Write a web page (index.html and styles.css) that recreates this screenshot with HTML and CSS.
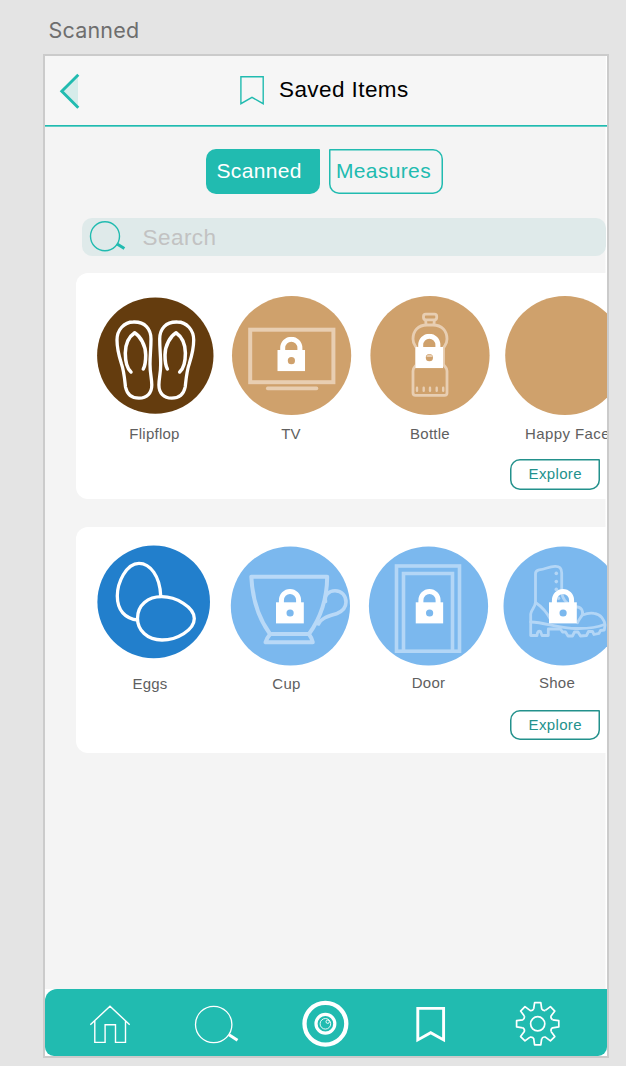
FILE: index.html
```html
<!DOCTYPE html>
<html lang="en">
<head>
<meta charset="utf-8">
<title>Saved Items</title>
<link rel="stylesheet" href="styles.css">
</head>
<body>
<svg class="defs" width="0" height="0" aria-hidden="true">
  <symbol id="lock" viewBox="0 0 28 35">
    <path d="M5.4 14V11.4A8.6 8.9 0 0 1 22.6 11.4V14" fill="none" stroke="#fff" stroke-width="5"/>
    <rect y="13.3" width="27.8" height="21.1" fill="#fff"/>
    <circle cx="14.1" cy="24" r="3.6" fill="currentColor"/>
  </symbol>
</svg>
<p class="artboard-name">Scanned</p>
<main class="artboard">
  <div class="screen">
  <header class="header">
    <svg class="back" width="24" height="40" viewBox="58 71 24 40">
      <path d="M78 75V107.500L61.500 91.300Z" fill="#d6ecea"/>
      <path d="M78.300 74.800L61.800 91.300L78.300 107.700" fill="none" stroke="#21bbb0" stroke-width="2.900"/>
    </svg>
    <svg class="mark" width="26" height="32" viewBox="239 75 26 32">
      <path d="M240.900 76.800H263.200V103.700L252 97.400L240.900 103.700Z" fill="none" stroke="#21bbb0" stroke-width="1.400"/>
    </svg>
    <h1 class="title">Saved Items</h1>
  </header>
  <div class="tabs">
    <span class="tab tab-active">Scanned</span>
    <span class="tab tab-outline">Measures</span>
  </div>
  <div class="search">
    <svg width="40" height="34" viewBox="88 220 40 34" fill="none" stroke="#21bbb0">
      <circle cx="105" cy="236.200" r="14.500" stroke-width="1.400"/>
      <path d="M116.700 243.800L124.400 248.600" stroke-width="3"/>
    </svg>
    <span class="placeholder">Search</span>
  </div>

  <section class="card">
    <div class="items">
      <div class="item brown">
        <svg width="120" height="120" viewBox="95 296 120 120">
          <circle cx="155.300" cy="355.600" r="58.200" fill="#643c0e"/>
          <g fill="none" stroke="#fff" stroke-width="3.300" stroke-linecap="round" stroke-linejoin="round">
            <g id="sandal">
              <path d="M133.300 322C145 321.500 151 329 151 339C151 350 150 355 150 364C150 374 151.800 378 151.800 385C151.800 393 147 398.200 139 398.200C131 398.200 127 394 125.500 387C124.500 378 124 371 121.500 364C119 356 117 350 117 340C117 330 124 322 133.300 322Z"/>
              <path d="M131 372C126.500 368 125.300 359 125.300 353C125.500 343 130 336 134.700 332.800C140 336 145.700 345 145.700 355C145.700 361 145 366 143.300 369" stroke-width="3.500"/>
            </g>
            <use href="#sandal" transform="matrix(-1 0 0 1 310.700 0)"/>
          </g>
        </svg>
        <span class="label label-flipflop">Flipflop</span>
      </div>
      <div class="item tan">
        <svg width="120" height="120" viewBox="232 296 120 120">
          <circle cx="291.600" cy="355.500" r="59.600" fill="currentColor"/>
          <g fill="none" stroke="#e8ceb2">
            <rect x="250.200" y="329.700" width="83.200" height="52.500" stroke-width="4"/>
            <path d="M267.700 388.400H316.500" stroke-width="3.600" stroke-linecap="round"/>
          </g>
          <use href="#lock" x="277.300" y="336.700" width="28" height="35"/>
        </svg>
        <span class="label label-tv">TV</span>
      </div>
      <div class="item tan">
        <svg width="120" height="120" viewBox="370 296 120 120">
          <circle cx="430" cy="355.500" r="59.600" fill="currentColor"/>
          <g fill="none" stroke="#e8ceb2" stroke-width="2.800">
            <rect x="423.500" y="314.200" width="13.200" height="5.600" rx="2.200"/>
            <path d="M425.700 320.500L426 324.500M434.300 320.500L434 324.500"/>
            <path d="M416.500 348C415 345 413 344 413 339C413 331 418 325 427 325H433C442 325 447 331 447 339C447 344 445 345 443.500 348V364C444 367 447 367 447 371V393Q447 395.300 444.500 395.300H415.500Q413 395.300 413 393V371C413 367 416 367 416.500 364Z"/>
            <path d="M417 387.700V390.800M423.700 387.700V390.800M430 387.700V390.800M436.700 387.700V390.800M443.200 387.700V390.800" stroke-width="2.400" stroke-linecap="round"/>
          </g>
          <use href="#lock" x="415.300" y="333.700" width="28" height="35"/>
          <path d="M426.300 357A3.300 3.300 0 0 1 432.700 357Z" fill="#e8ceb2"/>
        </svg>
        <span class="label label-bottle">Bottle</span>
      </div>
      <div class="item tan">
        <svg width="120" height="120" viewBox="505 296 120 120">
          <circle cx="564.800" cy="355.500" r="59.600" fill="currentColor"/>
        </svg>
        <span class="label label-happy">Happy Face</span>
      </div>
    </div>
    <span class="explore">Explore</span>
  </section>

  <section class="card card-blue">
    <div class="items">
      <div class="item">
        <svg width="120" height="120" viewBox="94 546 120 120">
          <circle cx="153.700" cy="601.900" r="56.300" fill="#227fcc"/>
          <g fill="none" stroke="#fff" stroke-width="3.300">
            <path d="M160.700 596C160 576 150 563.300 139 563.300C126 563.300 117.300 583 117.300 596C117.300 610 125 619 138 620"/>
            <path d="M161.700 596.700C176 596.700 194.300 607 194.300 618.500C194.300 630 177 640 162 640C147 640 137.500 630 137.500 618.500C137.500 605 148 596.700 161.700 596.700Z"/>
          </g>
        </svg>
        <span class="label label-eggs">Eggs</span>
      </div>
      <div class="item sky">
        <svg width="120" height="120" viewBox="231 546 120 120">
          <circle cx="290.400" cy="606" r="59.600" fill="currentColor"/>
          <g fill="none" stroke="#b9d9f7" stroke-width="4" stroke-linejoin="round" stroke-linecap="round">
            <path d="M251.300 576.700H327.200C327 600 320.500 618 309 634H270C259 619 252.500 601 251.300 576.700Z"/>
            <path d="M270 634.300Q267 637.500 265.500 642.300H312.800Q311.500 637.500 309 634.300"/>
            <path d="M325.500 601.500C324 595 329 590.700 335 590.700C342 590.700 346 596 346 602C346 608 343 611 337 613.500C328 616.500 321 618 318.500 624" stroke-width="3.600"/>
          </g>
          <use href="#lock" x="276" y="589" width="28" height="35"/>
        </svg>
        <span class="label label-cup">Cup</span>
      </div>
      <div class="item sky">
        <svg width="120" height="120" viewBox="369 546 120 120">
          <circle cx="428.500" cy="606" r="59.600" fill="currentColor"/>
          <g fill="none" stroke="#b3d6f6" stroke-width="3.600">
            <rect x="396.500" y="566" width="63" height="85.200"/>
            <path d="M403.500 650V573.500H452.500V650"/>
          </g>
          <use href="#lock" x="415.500" y="589" width="28" height="35"/>
        </svg>
        <span class="label label-door">Door</span>
      </div>
      <div class="item sky">
        <svg width="120" height="120" viewBox="504 546 120 120">
          <circle cx="563.100" cy="606" r="59.600" fill="currentColor"/>
          <g fill="none" stroke="#b3d6f6" stroke-width="2.800" stroke-linejoin="round" stroke-linecap="round">
            <path d="M535.500 602V574Q535.300 570.500 539 569.800C546 569.500 548 566.500 555 566.300Q561.700 566 561.700 573V591C562 599 566 603 573 607Q579 606 581.700 609.500Q583 612 582.500 615Q589 612.300 594 613.300C601 614 604.500 620 605 625L604.300 630L600.500 630.500L599 633.300L594 634.500L592.500 631.500H588.500L586.500 635.500L580.500 636L578 632H574.500L572.500 636H568L565.500 632H562.500L560.500 629H548.300V635.500H542L540.500 631.500Q537.500 630 537 635.500H530.700V614C531.500 609 535 608 535.500 602Z"/>
            <path d="M530.700 622C545 622.500 555 627.500 571.700 628.300C585 629 596 628 604.500 624.500M535.500 602.500C544 608 548 614 551.700 621.500M582.500 614.500C580.500 618 578.500 620 577.500 622.700"/>
          </g>
          <g fill="#b3d6f6"><circle cx="556.300" cy="573.400" r="1.800"/><circle cx="556.300" cy="581.600" r="1.800"/><circle cx="556.300" cy="589.400" r="1.800"/><circle cx="558.500" cy="598.300" r="1.800"/></g>
          <use href="#lock" x="549" y="589" width="28" height="35"/>
        </svg>
        <span class="label label-shoe">Shoe</span>
      </div>
    </div>
    <span class="explore">Explore</span>
  </section>
  </div>

  <nav class="nav">
    <svg width="44" height="50" viewBox="88 999 44 50" fill="none" stroke="#fff" stroke-width="1.400">
      <path d="M90.300 1024.700L110 1006.300L129.700 1024.700M94.800 1021V1042.400H105.100V1024.700H115.500V1042.400H125.500V1021"/>
    </svg>
    <svg width="46" height="50" viewBox="193 999 46 50" fill="none" stroke="#fff">
      <circle cx="213.700" cy="1024.500" r="18.200" stroke-width="1.300"/>
      <path d="M229 1034.800L237.500 1040.200" stroke-width="3"/>
    </svg>
    <svg width="50" height="50" viewBox="300 999 50 50" fill="none" stroke="#fff">
      <circle cx="325.400" cy="1023.800" r="20.900" stroke-width="4.300"/>
      <circle cx="325.400" cy="1023.800" r="9.400" stroke-width="3.200"/>
      <circle cx="325.400" cy="1023.800" r="5.300" stroke-width="0.900"/>
      <circle cx="327.700" cy="1021.700" r="1.700" stroke-width="0.900"/>
    </svg>
    <svg width="40" height="50" viewBox="411 999 40 50" fill="none" stroke="#fff" stroke-width="2.900">
      <path d="M417.800 1008.400H443.600V1039.900L430.700 1032.700L417.800 1039.900Z"/>
    </svg>
    <svg width="50" height="50" viewBox="512 999 50 50" fill="none" stroke="#fff" stroke-width="1.700" stroke-linejoin="round">
      <g transform="translate(537.700 1023.800)">
        <path id="tooth" d="M-4 -14.900L-3.100 -21.100H3.100L4 -14.900C4.600 -13.700 6.200 -13.100 7.710 -13.360"/>
        <use href="#tooth" transform="rotate(45)"/>
        <use href="#tooth" transform="rotate(90)"/>
        <use href="#tooth" transform="rotate(135)"/>
        <use href="#tooth" transform="rotate(180)"/>
        <use href="#tooth" transform="rotate(225)"/>
        <use href="#tooth" transform="rotate(270)"/>
        <use href="#tooth" transform="rotate(315)"/>
        <circle r="7.100"/>
      </g>
    </svg>
  </nav>
</main>
</body>
</html>
```
FILE: styles.css
```css
* { box-sizing: border-box; }

body {
  margin: 0;
  height: 1066px;
  overflow: hidden;
  background: #e4e4e4;
  font-family: "Liberation Sans", Arial, sans-serif;
}

svg { display: block; flex: none; overflow: visible; }
.defs { height: 0; }

.artboard-name {
  margin: 0;
  padding: 17px 0 0 48.500px;
  height: 54px;
  font: 21.5px/27px Inter, Roboto, sans-serif;
  letter-spacing: 0.2px;
  color: #6e6e6e;
}

.artboard {
  display: flex;
  flex-direction: column;
  width: 566px;
  height: 1004px;
  margin-left: 43px;
  border: 2px solid #cbcbcb;
  background: #fff;
  overflow: hidden;
}

.screen {
  flex: 1;
  min-height: 0;
  /* leaves a thin white strip at the artboard's right edge */
  background: linear-gradient(#f4f4f4, #f4f4f4) 0 0 / 560.5px 100% no-repeat;
}

.header {
  display: flex;
  align-items: flex-start;
  height: 71px;
  border-bottom: 1px solid #63cec6;
  box-shadow: inset 0 -1px #20bbb0;
  background: linear-gradient(#f6f6f6, #f6f6f6) 0 0 / 560.5px 100% no-repeat;
}
.back { margin: 15px 0 0 13px; }
.mark { margin: 19px 0 0 157px; }
.title {
  margin: 19px 0 0 14px;
  font-size: 22.5px;
  line-height: 29px;
  font-weight: 400;
  letter-spacing: 0.42px;
  color: #000;
  white-space: nowrap;
}

.tabs {
  display: flex;
  gap: 9px;
  margin: 22px 0 0 161px;
}
.tab {
  width: 114px;
  height: 44.500px;
  font-size: 21px;
  line-height: 44px;
  letter-spacing: 0.35px;
  border-radius: 10px;
}
.tab-active {
  padding-left: 10.500px;
  background: #21bbb0;
  color: #fff;
  border-top-right-radius: 1px;
}
.tab-outline {
  padding-left: 7px;
  color: #21bbb0;
  box-shadow: inset 0 0 0 1.5px #21bbb0;
  border-top-left-radius: 1px;
}

.search {
  display: flex;
  align-items: center;
  width: 524px;
  height: 38px;
  margin: 24.500px 0 0 37px;
  padding-left: 6px;
  padding-bottom: 1px;
  border-radius: 10px;
  background: #dfeaea;
}
.placeholder {
  margin-left: 14.500px;
  padding-top: 2px;
  font-size: 22.5px;
  letter-spacing: 0.45px;
  color: #c2c2c2;
}

.card {
  width: 531px;
  height: 226px;
  margin: 17px 0 0 31px;
  padding-top: 23px;
  border-radius: 12px 0 0 12px;
  background: #fff;
}
.card-blue { margin-top: 27.500px; padding-top: 19px; }

.items {
  display: grid;
  grid-template-columns: 137px 138px 135px 120px;
  padding-left: 19px;
}
.card-blue .items { padding-left: 18px; }
.item { width: 120px; }
.tan { color: #cfa16c; }
.sky { color: #7bb8ee; }

.label {
  display: block;
  padding-top: 8px;
  font-size: 15px;
  line-height: 20px;
  letter-spacing: 0.25px;
  text-align: center;
  white-space: nowrap;
  color: #606060;
}
.label-flipflop { padding-right: 1px; }
.label-tv { padding-right: 2px; }
.label-happy { padding-left: 5px; letter-spacing: 0.4px; }
.label-eggs { padding-right: 8px; }
.label-cup { padding-right: 9px; }
.label-door { padding-right: 1px; }
.label-shoe { padding-right: 14px; }
.label-door, .label-shoe { padding-top: 7px; }

.explore {
  display: block;
  width: 90.500px;
  height: 30.500px;
  margin: 15px 0 0 433.500px;
  padding-left: 1px;
  border-radius: 10px 1px 10px 10px;
  box-shadow: inset 0 0 0 1.5px #23918c;
  font-size: 15px;
  line-height: 30px;
  letter-spacing: 0.35px;
  text-align: center;
  color: #23918c;
}
.card-blue .explore { margin-top: 16px; }

.nav {
  display: flex;
  align-items: flex-start;
  gap: 61px;
  height: 67px;
  margin-top: auto;
  padding: 10px 0 0 43px;
  border-radius: 12px 0 9px 9px;
  background: #21bbb0;
}
```
